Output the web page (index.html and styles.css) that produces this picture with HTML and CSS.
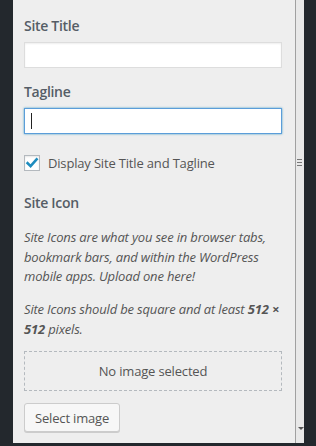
FILE: index.html
```html
<!DOCTYPE html>
<html lang="en">
<head>
    <meta charset="UTF-8">
    <meta name="viewport" content="width=device-width, initial-scale=1.0">
    <title>Site Identity</title>
    <link rel="stylesheet" href="styles.css">
</head>
<body>
    <div class="frame">
        <!-- Painel de identidade do site -->
        <div class="panel">
            <div class="controls">
                <label class="field">
                    <span class="title">Site Title</span>
                    <input type="text" class="text-input">
                </label>

                <label class="field">
                    <span class="title">Tagline</span>
                    <span class="text-input focused"><span class="caret"></span></span>
                </label>

                <label class="check-row">
                    <span class="checkbox">
                        <svg viewBox="0 0 16 16" width="16" height="16">
                            <path d="M3.6 8.2 L6.6 11.2 L12.6 4.4" fill="none" stroke="#1e8cbe" stroke-width="2.6" stroke-linecap="square"/>
                        </svg>
                    </span>
                    Display Site Title and Tagline
                </label>

                <div class="field site-icon">
                    <span class="title">Site Icon</span>
                    <p class="description">Site Icons are what you see in browser tabs, bookmark bars, and within the WordPress mobile apps. Upload one here!</p>
                    <p class="description">Site Icons should be square and at least <strong>512&nbsp;&times;</strong> <strong>512</strong> pixels.</p>
                    <div class="placeholder">No image selected</div>
                    <button class="button">Select image</button>
                </div>
            </div>
            <div class="panel-foot"></div>
        </div>
        <div class="scrollbar">
            <span class="grip"></span>
            <span class="arrow"></span>
        </div>
    </div>
</body>
</html>
```

FILE: styles.css
```css
body {
    margin: 0;
    background-color: #23282d;
    font-family: 'Open Sans', sans-serif;
    letter-spacing: -0.17px;
}

.frame {
    display: flex;
    width: 316px;
    height: 443px;
    padding-left: 13px;
    box-sizing: border-box;
}

.panel {
    width: 282px;
    background-color: #eee;
    border-right: 1px solid #a0a0a0;
    display: flex;
    flex-direction: column;
}

.controls {
    flex: 1;
    padding: 16px 13px 0 11px;
}

.field {
    display: block;
    margin-bottom: 14px;
}

.title {
    display: block;
    font-size: 14px;
    font-weight: 600;
    color: #555d66;
    line-height: 20px;
    letter-spacing: -0.3px;
    margin-bottom: 6px;
}

.text-input {
    display: block;
    width: 100%;
    height: 26px;
    box-sizing: border-box;
    border: 1px solid #ddd;
    background: white;
    box-shadow: inset 0 1px 2px rgba(0, 0, 0, 0.07);
    margin: 0;
    padding: 0 6px;
}

.text-input.focused {
    border-color: #5b9dd9;
    box-shadow: 0 0 2px rgba(30, 140, 190, 0.8);
    padding-top: 4px;
}

.caret {
    display: block;
    width: 1px;
    height: 16px;
    background: #222;
}

.check-row {
    display: flex;
    align-items: center;
    gap: 8px;
    font-size: 13px;
    color: #555;
    height: 18px;
    margin-top: 20px;
    margin-bottom: 21px;
}

.checkbox {
    width: 16px;
    height: 16px;
    box-sizing: border-box;
    border: 1px solid #b4b9be;
    background: white;
    box-shadow: inset 0 1px 2px rgba(0, 0, 0, 0.1);
    display: flex;
}

.checkbox svg {
    margin: -1px;
}

.site-icon .title {
    margin-bottom: 15px;
}

.description {
    font-size: 13px;
    font-style: italic;
    color: #555;
    line-height: 19.5px;
    margin: 0 0 12px;
}

.description:first-of-type {
    margin-bottom: 13.5px;
}

.description strong {
    font-weight: 700;
}

.placeholder {
    height: 40px;
    border: 1px dashed #b4b9be;
    box-sizing: border-box;
    display: flex;
    align-items: center;
    justify-content: center;
    font-size: 13px;
    color: #555;
    margin-top: 12px;
}

.button {
    margin-top: 12px;
    height: 29px;
    padding: 0 10px;
    font-family: 'Open Sans', sans-serif;
    font-size: 13px;
    letter-spacing: -0.17px;
    color: #555;
    background: #f7f7f7;
    border: 1px solid #ccc;
    border-radius: 3px;
    box-shadow: 0 1px 0 #ccc;
}

.panel-foot {
    height: 9px;
    border-top: 1px solid #ddd;
}

.scrollbar {
    width: 8px;
    background-color: #e8e8e8;
    position: relative;
}

.grip {
    position: absolute;
    left: 1px;
    top: 159px;
    width: 5px;
    height: 7px;
    background: repeating-linear-gradient(#777 0 1px, transparent 1px 3px);
}

.arrow {
    position: absolute;
    left: 2px;
    top: 427px;
    border: 3px solid transparent;
    border-top-color: #555;
}
```
